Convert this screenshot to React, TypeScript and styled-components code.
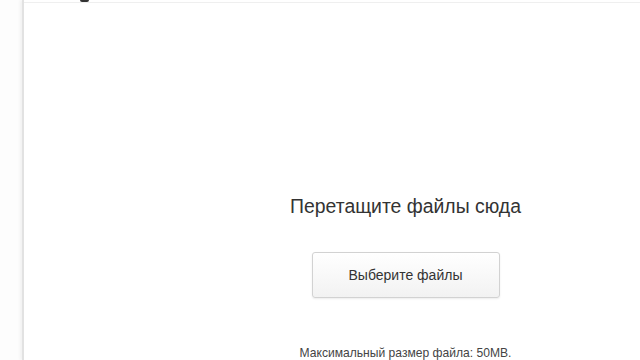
import React from 'react';
import styled, { createGlobalStyle } from 'styled-components';

const GlobalStyle = createGlobalStyle`
  html, body {
    margin: 0;
    padding: 0;
    background: #ffffff;
    font-family: Arial, "Liberation Sans", sans-serif;
  }
`;

const App = () => {
  return (
    <>
      <GlobalStyle />
      <Page>
        <Sidebar />
        <Panel>
          <TopBar>
            <Mark />
          </TopBar>
          <DropZone>
            <DropTitle>Перетащите файлы сюда</DropTitle>
            <ChooseButton type="button">Выберите файлы</ChooseButton>
            <Hint>Максимальный размер файла: 50MB.</Hint>
          </DropZone>
        </Panel>
      </Page>
    </>
  );
};

export default App;

// css

const Page = styled.div`
  display: flex;
  width: 640px;
  height: 360px;
  overflow: hidden;

  background: #ffffff;
`;

const Sidebar = styled.div`
  flex: 0 0 22px;
  background: #fdfdfd;
`;

const Panel = styled.div`
  display: flex;
  flex-direction: column;
  flex: 1;
  border-left: 2px solid #e2e2e2;

  background: #ffffff;
  box-shadow: -2px 0 3px rgba(0, 0, 0, 0.05);
`;

const TopBar = styled.div`
  position: relative;
  height: 3px;
  border-bottom: 1px solid #efefef;
`;

const Mark = styled.span`
  position: absolute;
  top: 0;
  left: 56px;
  width: 9px;
  height: 2px;
  border-radius: 0 0 3px 3px;

  background: #333333;
`;

const DropZone = styled.div`
  display: flex;
  flex-direction: column;
  align-items: center;
  padding: 192px 0 0 147px;
`;

const DropTitle = styled.h2`
  margin: 0;

  color: #333333;
  font-weight: 400;
  font-size: 19.4px;
  line-height: 23px;
`;

const ChooseButton = styled.button`
  width: 188px;
  height: 46px;
  margin-top: 34px;
  border: 1px solid #d2d2d2;
  border-radius: 3px;

  background: linear-gradient(#ffffff, #f2f2f2);
  box-shadow: 0 1px 2px rgba(0, 0, 0, 0.08);

  color: #333333;
  font-family: inherit;
  font-size: 14px;
`;

const Hint = styled.p`
  margin: 48px 0 0;

  color: #444444;
  font-size: 12.1px;
  line-height: 14px;
`;
